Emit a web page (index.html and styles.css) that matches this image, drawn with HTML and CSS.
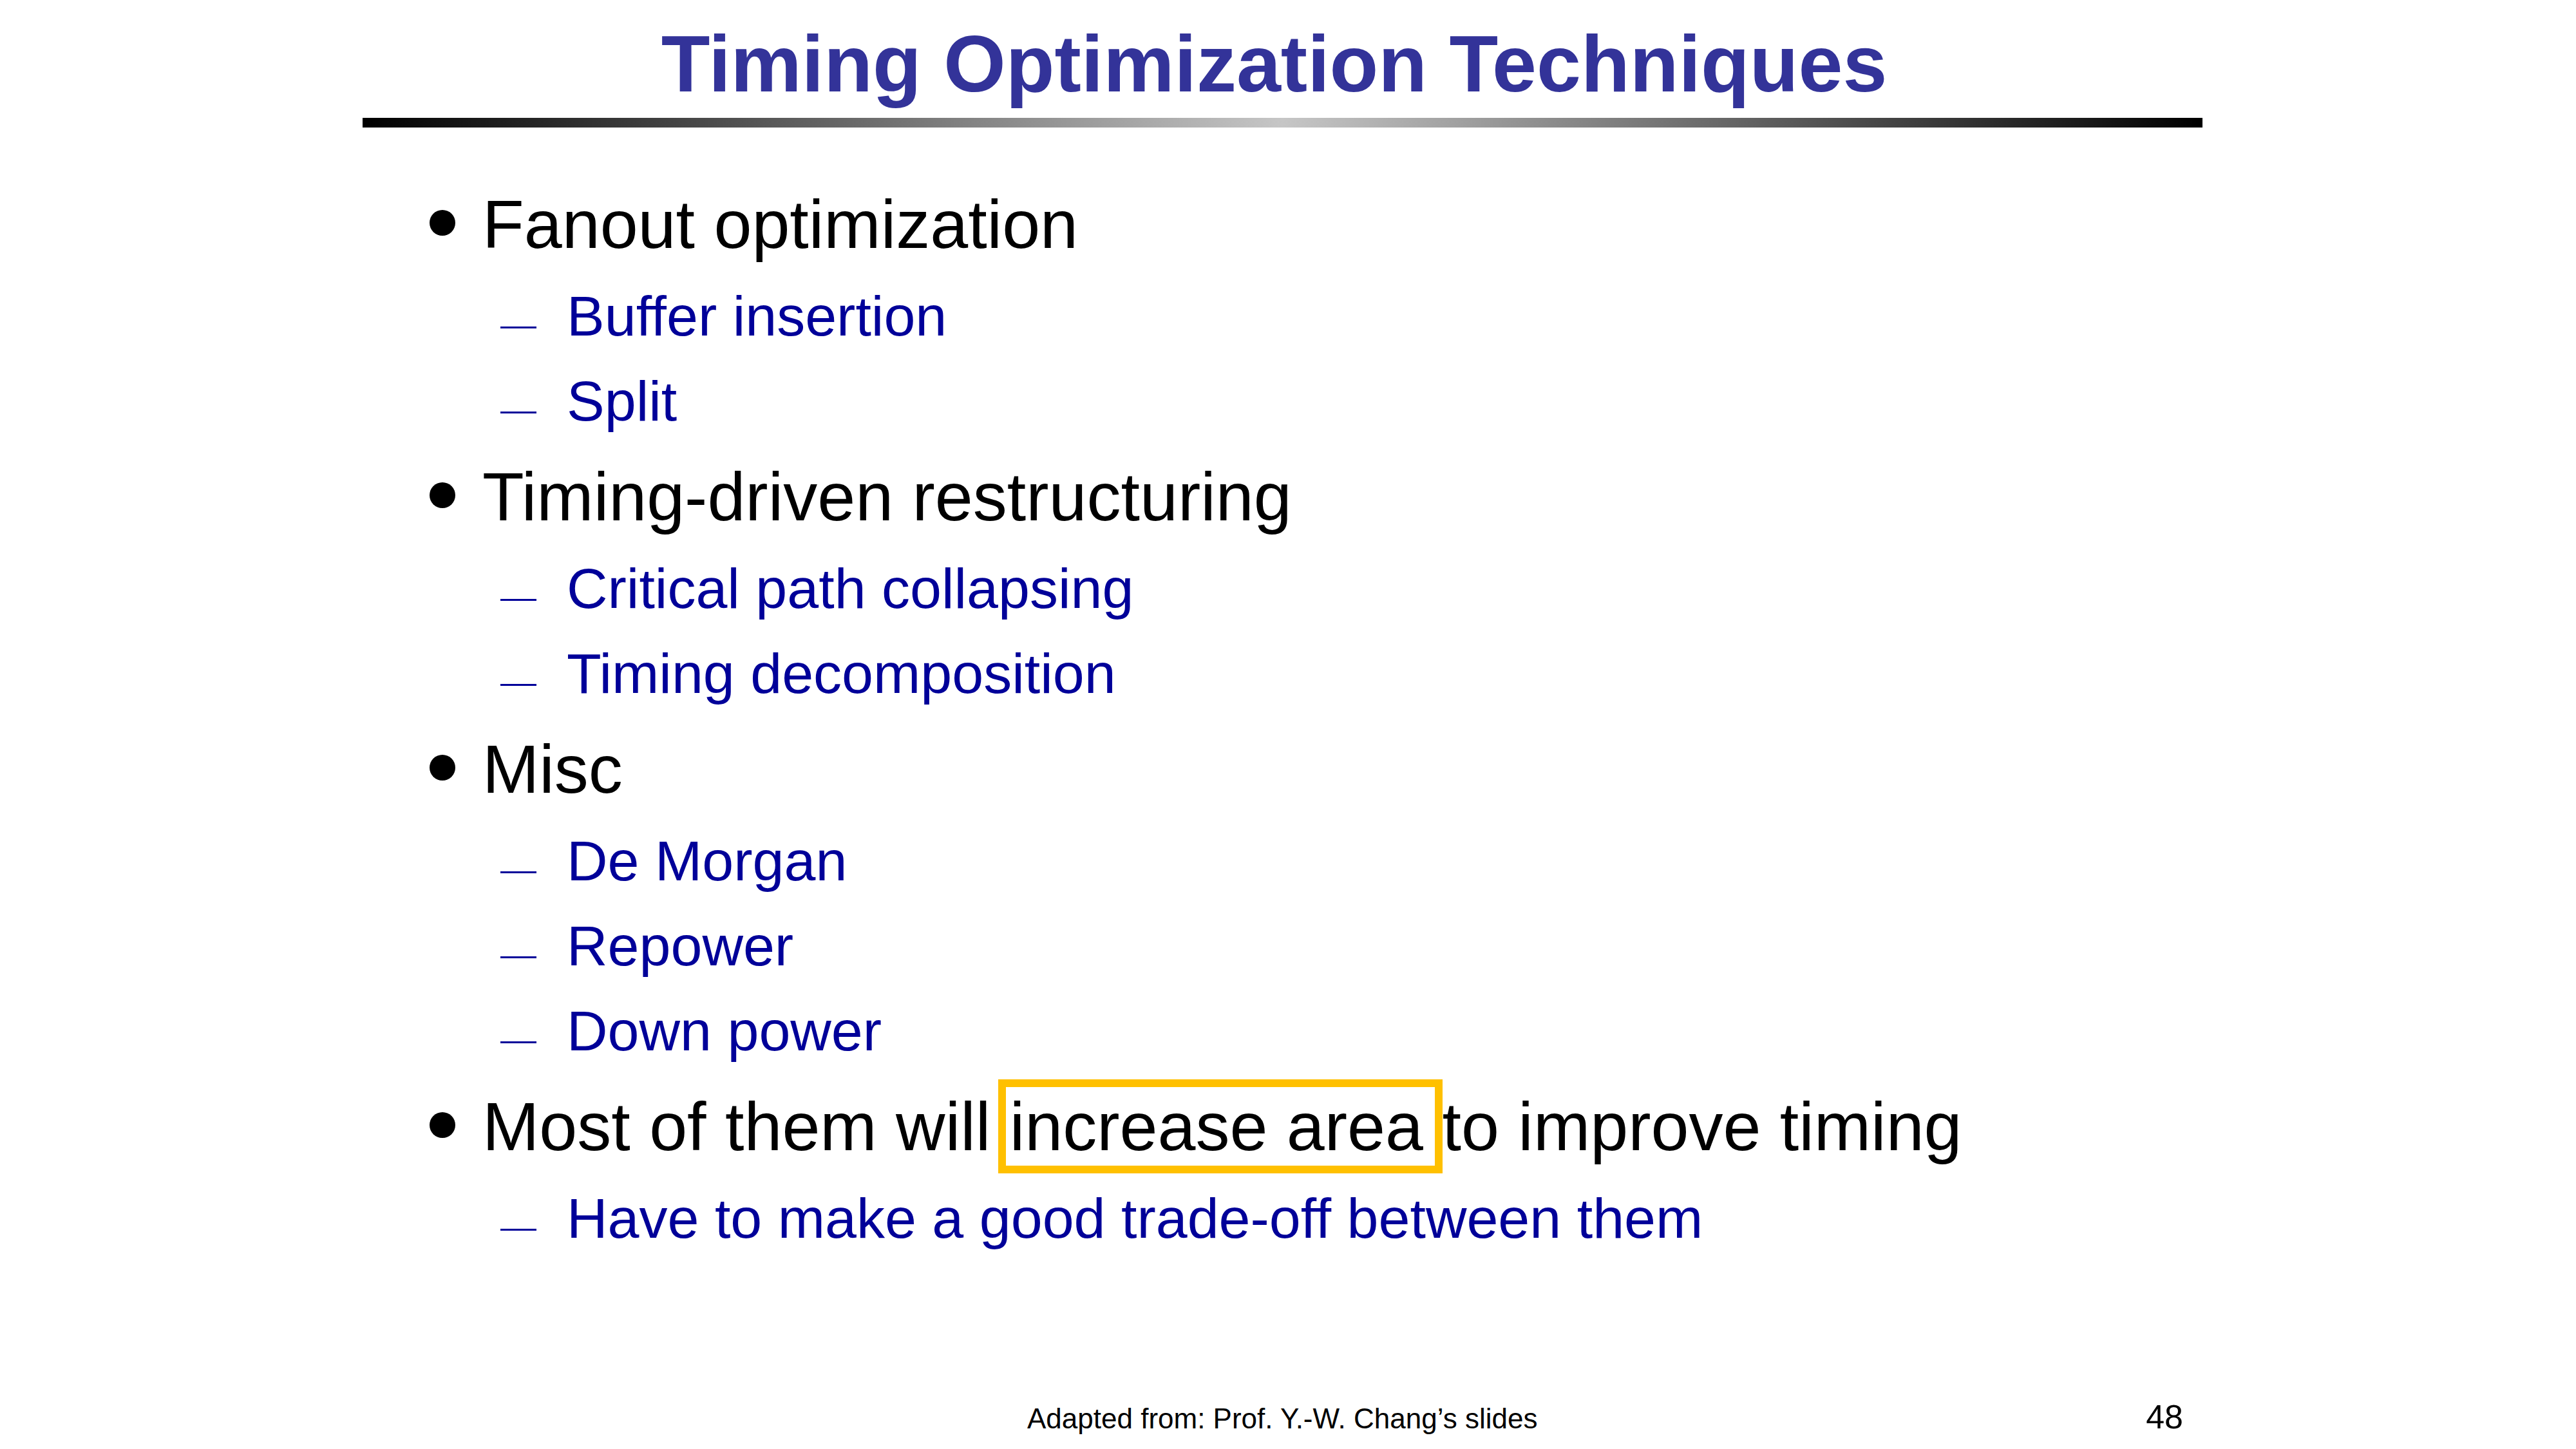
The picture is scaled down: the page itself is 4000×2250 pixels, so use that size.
FILE: index.html
```
<!DOCTYPE html>
<html lang="en">
<head>
<meta charset="utf-8">
<title>Timing Optimization Techniques</title>
<link rel="stylesheet" href="styles.css">
</head>
<body>
<div class="slide">
  <header class="head">
    <h1 class="title">Timing Optimization Techniques</h1>
    <div class="rule"></div>
  </header>
  <ul class="points">
    <li class="l1"><span class="dot"></span>Fanout optimization</li>
    <li class="l2"><span class="dash"></span>Buffer insertion</li>
    <li class="l2"><span class="dash"></span>Split</li>
    <li class="l1"><span class="dot"></span>Timing-driven restructuring</li>
    <li class="l2"><span class="dash"></span>Critical path collapsing</li>
    <li class="l2"><span class="dash"></span>Timing decomposition</li>
    <li class="l1"><span class="dot"></span>Misc</li>
    <li class="l2"><span class="dash"></span>De Morgan</li>
    <li class="l2"><span class="dash"></span>Repower</li>
    <li class="l2"><span class="dash"></span>Down power</li>
    <li class="l1"><span class="dot"></span>Most of them will <span class="mark">increase area</span> to improve timing</li>
    <li class="l2"><span class="dash"></span>Have to make a good trade-off between them</li>
  </ul>
  <footer class="foot">
    <span class="credit">Adapted from: Prof. Y.-W. Chang’s slides</span>
    <span class="page">48</span>
  </footer>
</div>
</body>
</html>
```

FILE: styles.css
```
html, body {
  margin: 0;
  padding: 0;
  background: #ffffff;
}

.slide {
  width: 4000px;
  height: 2250px;
  box-sizing: border-box;
  padding-top: 24px;
  padding-bottom: 20px;
  display: flex;
  flex-direction: column;
  font-family: "Liberation Sans", Arial, sans-serif;
  color: #000000;
  overflow: hidden;
}

.head {
  margin-left: 563px;
  width: 2857px;
}

.title {
  margin: 0;
  padding-right: 26px;
  font-size: 124px;
  line-height: 150px;
  font-weight: bold;
  color: #333399;
  text-align: center;
  white-space: nowrap;
}

.rule {
  margin-top: 9px;
  height: 15px;
  background: linear-gradient(to right, #000000 0%, #c6c6c6 50%, #000000 100%);
}

.points {
  list-style: none;
  margin: 86px 0 0 667px;
  padding: 0;
  white-space: nowrap;
}

.l1 {
  font-size: 106px;
  line-height: 128px;
  height: 128px;
  margin-top: 31px;
  color: #000000;
}

.l1:first-child {
  margin-top: 0;
}

.l2 {
  font-size: 88px;
  line-height: 106px;
  height: 106px;
  margin-top: 26px;
  padding-left: 110px;
  color: #000099;
}

.dot {
  display: inline-block;
  width: 40px;
  height: 40px;
  border-radius: 50%;
  background: #000000;
  vertical-align: baseline;
  margin-bottom: 19px;
  margin-right: 42px;
}

.dash {
  display: inline-block;
  width: 56px;
  height: 3px;
  background: #000099;
  vertical-align: baseline;
  margin-bottom: 11px;
  margin-right: 47px;
}

.mark {
  position: relative;
}

.mark::before {
  content: "";
  position: absolute;
  left: -18px;
  right: -30px;
  top: -14px;
  bottom: -14px;
  border: 12px solid #ffc000;
  box-sizing: border-box;
}

.foot {
  margin-top: auto;
  height: 60px;
  display: flex;
  align-items: baseline;
  padding-left: 1595px;
  padding-right: 610px;
  white-space: nowrap;
}

.credit {
  font-size: 44px;
  line-height: 60px;
  color: #000000;
}

.page {
  margin-left: auto;
  font-size: 52px;
  line-height: 60px;
  color: #000000;
}
```
